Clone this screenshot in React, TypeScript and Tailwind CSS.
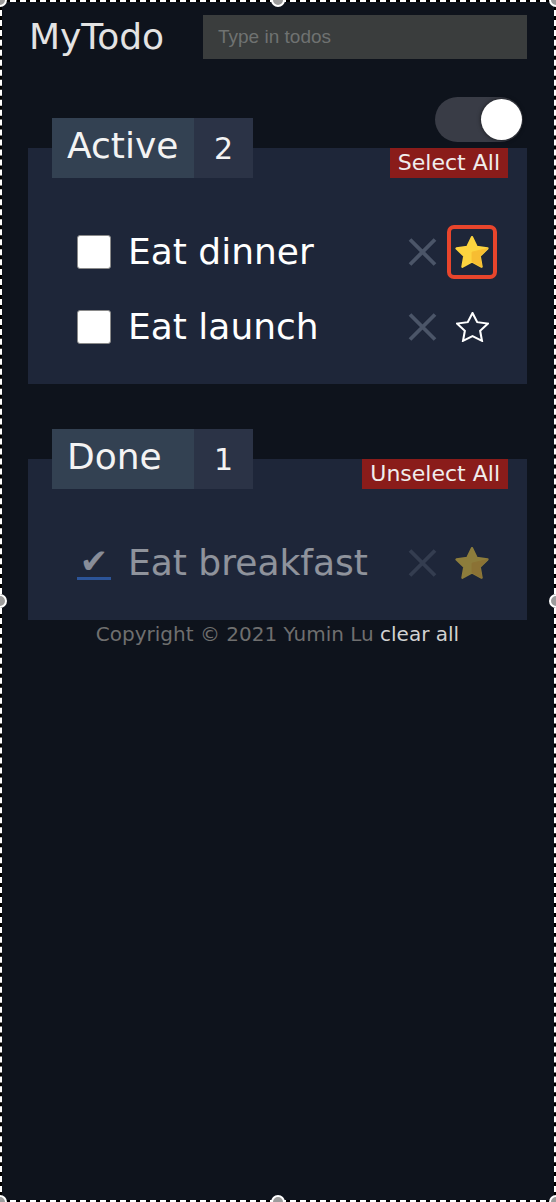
import React from "react";

function XIcon() {
  return (
    <svg width="29" height="28" viewBox="0 0 29 28" className="shrink-0">
      <path d="M2 1.5 L27 26.5 M27 1.5 L2 26.5" stroke="#4b5568" strokeWidth="3.8" fill="none" />
    </svg>
  );
}

const STAR =
  "M12 1.5 L15.1 7.8 L22 8.8 L17 13.7 L18.2 20.6 L12 17.3 L5.8 20.6 L7 13.7 L2 8.8 L8.9 7.8 Z";

function StarFilled() {
  return (
    <svg width="34" height="32" viewBox="1.2 0.8 21.6 20.6">
      <path d={STAR} fill="#fcd43f" stroke="#fcd43f" strokeWidth="1.4" strokeLinejoin="round" />
      <path
        d="M12 11.2 L22 8.8 L17 13.7 L18.2 20.6 L12 17.3 Z"
        fill="#f7bd32"
        stroke="#f7bd32"
        strokeWidth="0.6"
        strokeLinejoin="round"
      />
    </svg>
  );
}

function StarOutline() {
  return (
    <svg width="33" height="30" viewBox="1.2 0.8 21.6 20.6" preserveAspectRatio="none">
      <path d={STAR} fill="none" stroke="#ffffff" strokeWidth="1.35" strokeLinejoin="miter" />
    </svg>
  );
}

function Row({
  text,
  starred,
  focused,
  done,
}: {
  text: string;
  starred: boolean;
  focused?: boolean;
  done?: boolean;
}) {
  return (
    <li className={`flex items-center h-[54px] pl-[49px] pr-[30px] ${done ? "opacity-50" : ""}`}>
      {done ? (
        <div className="w-[34px] h-[34px] shrink-0 flex flex-col items-center justify-end">
          <span className="text-[34px] leading-[26px] text-[#f2f4f8] font-['DejaVu_Sans',sans-serif]">✔</span>
          <div className="mt-[3px] w-[34px] h-[3px] bg-[#3b82f6]" />
        </div>
      ) : (
        <div className="w-[34px] h-[34px] shrink-0 rounded-[3px] bg-white border border-[#8a8a8a]" />
      )}
      <span className="ml-[17px] flex-1 text-[36px] leading-none text-white whitespace-nowrap">{text}</span>
      <XIcon />
      <button
        className={`ml-[10px] w-[50px] h-[54px] shrink-0 flex items-center justify-center rounded-[7px] border-4 ${
          focused ? "border-[#e8452c]" : "border-transparent"
        }`}
      >
        {starred ? <StarFilled /> : <StarOutline />}
      </button>
    </li>
  );
}

function Section({
  title,
  count,
  action,
  children,
}: {
  title: string;
  count: number;
  action: string;
  children: React.ReactNode;
}) {
  return (
    <section className="bg-[#1e2639] pb-[30px]">
      <div className="flex items-start justify-between h-[30px] pl-[24px] pr-[19px]">
        <div className="-mt-[30px] flex h-[60px]">
          <div className="w-[142px] bg-[#334152] pl-[15px] pt-[10px] text-[36px] leading-[36px] text-[#f3f3f3]">
            {title}
          </div>
          <div className="w-[59px] bg-[#2b3346] flex items-center justify-center text-[30px] text-[#f3f3f3]">
            {count}
          </div>
        </div>
        <button className="h-[30px] px-[8px] bg-[#8a1c1a] text-[22px] leading-[30px] text-[#f0eded]">
          {action}
        </button>
      </div>
      <ul className="mt-[47px] flex flex-col gap-[21px]">{children}</ul>
    </section>
  );
}

function Handle({ className }: { className: string }) {
  return (
    <div
      className={`absolute w-[14px] h-[14px] rounded-full bg-[#9c9c9c] border-2 border-white ${className}`}
    />
  );
}

export default function App() {
  return (
    <div className="relative w-[556px] h-[1202px] overflow-hidden bg-[#0e131c] font-['DejaVu_Sans',sans-serif]">
      <div className="flex flex-col pl-[28px] pr-[29px] pt-[15px]">
        <header className="flex items-center h-[44px]">
          <h1 className="ml-px text-[36px] leading-none text-[#e3e3e3]">MyTodo</h1>
          <input
            placeholder="Type in todos"
            className="ml-auto w-[324px] h-[44px] bg-[#3a3d3d] pl-[15px] text-[19px] font-['Liberation_Sans',sans-serif] text-white placeholder:text-[#6f7271] outline-none"
          />
        </header>

        <div className="mt-[38px] flex justify-end pr-[4px]">
          <div className="relative w-[88px] h-[45px] rounded-full bg-[#393c46]">
            <div className="absolute right-[1px] top-[2px] w-[41px] h-[41px] rounded-full bg-white shadow-[0_0_4px_rgba(0,0,0,0.6)]" />
          </div>
        </div>

        <div className="mt-[6px]">
          <Section title="Active" count={2} action="Select All">
            <Row text="Eat dinner" starred focused />
            <Row text="Eat launch" starred={false} />
          </Section>
        </div>

        <div className="mt-[75px]">
          <Section title="Done" count={1} action="Unselect All">
            <Row text="Eat breakfast" starred done />
          </Section>
        </div>

        <p className="mt-[2px] text-center text-[20px] leading-6 text-[#6f6f6f]">
          Copyright © 2021 Yumin Lu <span className="text-[#d2d2d2]">clear all</span>
        </p>
      </div>

      <div className="pointer-events-none absolute inset-0 border-2 border-black" />
      <div className="pointer-events-none absolute inset-0 border-2 border-dashed border-white" />
      <Handle className="-left-[7px] -top-[7px]" />
      <Handle className="left-[271px] -top-[7px]" />
      <Handle className="-right-[7px] -top-[7px]" />
      <Handle className="-left-[7px] top-[594px]" />
      <Handle className="-right-[7px] top-[594px]" />
      <Handle className="-left-[7px] -bottom-[7px]" />
      <Handle className="left-[271px] -bottom-[7px]" />
      <Handle className="-right-[7px] -bottom-[7px]" />
    </div>
  );
}
